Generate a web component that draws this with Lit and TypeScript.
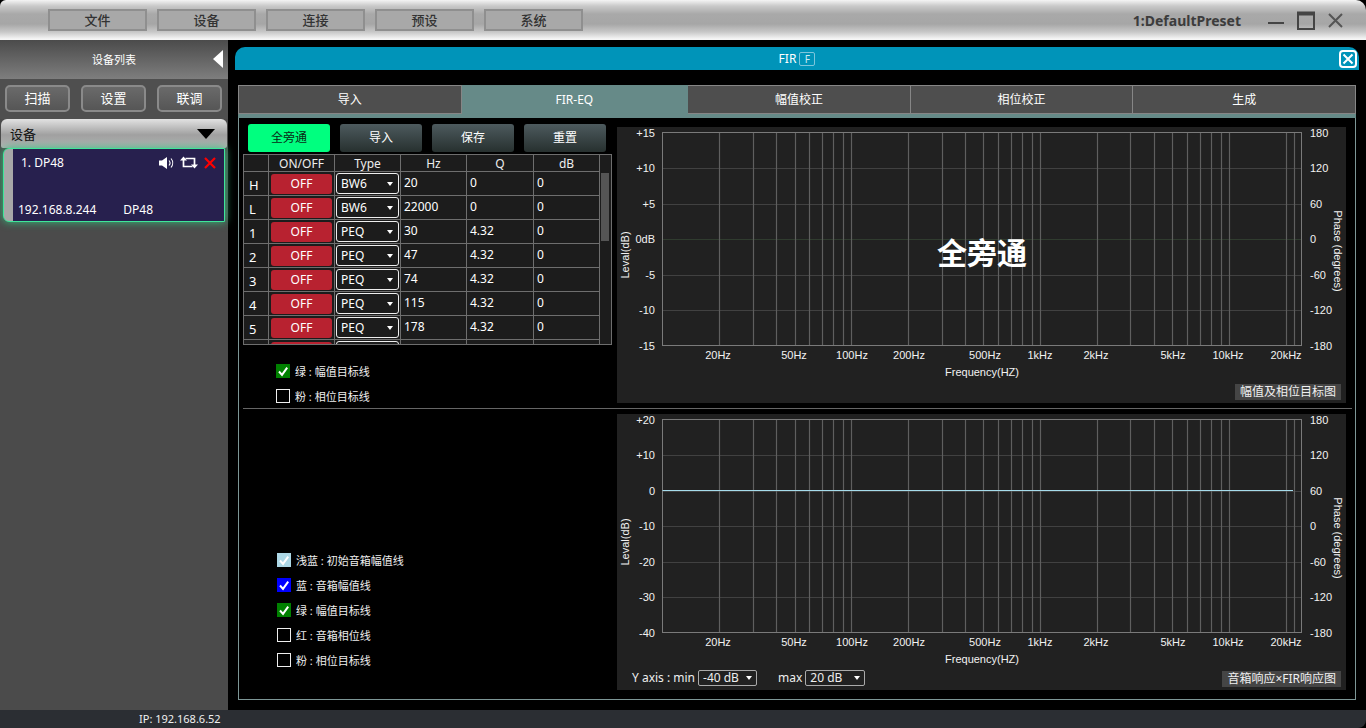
import { LitElement, html, svg, css } from 'lit'
import { customElement, property } from 'lit/decorators.js'

const FONT = css`"Noto Sans", "Noto Sans CJK SC", sans-serif`

// frequencies that get a vertical grid line
const FREQS = [20, 30, 40, 50, 60, 70, 80, 90, 100, 200, 300, 400, 500, 600, 700, 800, 900, 1000, 2000, 3000, 4000, 5000, 6000, 7000, 8000, 9000, 10000, 20000, 22000]
const TICKS: [string, number][] = [
  ['20Hz', 101], ['50Hz', 177], ['100Hz', 235], ['200Hz', 292], ['500Hz', 368],
  ['1kHz', 423], ['2kHz', 479], ['5kHz', 556], ['10kHz', 611], ['20kHz', 669],
]
const PHASE = ['180', '120', '60', '0', '-60', '-120', '-180']
const PLOT = { left: 45.5, right: 684.5, top: 5.5, bottom: 218.5 }

const freqX = (f: number) => Math.round(PLOT.left + 188.9 * Math.log10(f / 10)) + 0.5

@customElement('fir-chart')
export class FirChart extends LitElement {
  static styles = css`
    :host {
      display: block;
      position: relative;
      width: 729px;
      height: 276px;
      background: #212121;
    }
    svg {
      display: block;
    }
    text {
      font-family: 'Liberation Sans', sans-serif;
      font-size: 11px;
      fill: #f2f2f2;
    }
    .tag {
      position: absolute;
      right: 5px;
      bottom: 3px;
      height: 16px;
      padding: 0 5px;
      background: #454545;
      color: #f0f0f0;
      font-family: ${FONT};
      font-size: 12px;
      line-height: 16px;
    }
  `

  @property({ type: Array }) levels: string[] = []
  @property() tag = ''
  // dim green centre line on the target chart, light blue curve on the response chart
  @property({ type: Boolean }) curve = false

  private grid() {
    const step = (PLOT.bottom - PLOT.top) / 6
    return [1, 2, 3, 4, 5].map((i) => {
      const y = Math.round(PLOT.top + step * i) + 0.5
      const stroke = !this.curve && i === 3 ? '#41583f' : '#626262'
      return svg`<line x1=${PLOT.left} x2=${PLOT.right} y1=${y} y2=${y} stroke=${stroke} stroke-dasharray="1 1"></line>`
    })
  }

  render() {
    const step = (PLOT.bottom - PLOT.top) / 6
    return html`
      <svg width="729" height="276" viewBox="0 0 729 276">
        ${this.grid()}
        ${FREQS.map((f) => svg`<line x1=${freqX(f)} x2=${freqX(f)} y1=${PLOT.top} y2=${PLOT.bottom} stroke="#5f5f5f" stroke-width="1.2"></line>`)}
        <rect x=${PLOT.left} y=${PLOT.top} width=${PLOT.right - PLOT.left} height=${PLOT.bottom - PLOT.top} fill="none" stroke="#7a7a7a"></rect>
        ${this.curve ? svg`<line x1=${PLOT.left} x2="676" y1="76.5" y2="76.5" stroke="#a6dcec"></line>` : ''}
        ${this.levels.map((l, i) => svg`<text x="38" y=${PLOT.top + step * i + 4} text-anchor="end">${l}</text>`)}
        ${PHASE.map((l, i) => svg`<text x="693" y=${PLOT.top + step * i + 4}>${l}</text>`)}
        ${TICKS.map(([l, x]) => svg`<text x=${x} y="232" text-anchor="middle">${l}</text>`)}
        <text x="365" y="249" text-anchor="middle">Frequency(HZ)</text>
        <text transform="translate(12 128) rotate(-90)" text-anchor="middle">Leval(dB)</text>
        <text transform="translate(717 124) rotate(90)" text-anchor="middle">Phase (degrees)</text>
      </svg>
      <slot></slot>
      <div class="tag">${this.tag}</div>
    `
  }
}

interface EqRow {
  id: string
  type: string
  hz: string
  q: string
}

const ROWS: EqRow[] = [
  { id: 'H', type: 'BW6', hz: '20', q: '0' },
  { id: 'L', type: 'BW6', hz: '22000', q: '0' },
  { id: '1', type: 'PEQ', hz: '30', q: '4.32' },
  { id: '2', type: 'PEQ', hz: '47', q: '4.32' },
  { id: '3', type: 'PEQ', hz: '74', q: '4.32' },
  { id: '4', type: 'PEQ', hz: '115', q: '4.32' },
  { id: '5', type: 'PEQ', hz: '178', q: '4.32' },
  { id: '6', type: 'PEQ', hz: '276', q: '4.32' },
]

const MENU = ['文件', '设备', '连接', '预设', '系统']
const TABS = ['导入', 'FIR-EQ', '幅值校正', '相位校正', '生成']

@customElement('app-root')
export class AppRoot extends LitElement {
  static styles = css`
    :host {
      display: grid;
      grid-template-rows: 40px 1fr 18px;
      height: 728px;
      overflow: hidden;
      background: #000;
      color: #fff;
      font-family: ${FONT};
      font-size: 13px;
    }
    * {
      box-sizing: border-box;
    }

    /* title bar */
    .titlebar {
      display: flex;
      align-items: center;
      padding: 0 23px 0 48px;
      background: linear-gradient(#f4f4f4 0, #c9c9c9 6px, #a9a9a9 14px, #a6a6a6 24px, #c8c8c8 32px, #f6f6f6 39px);
      border-top-left-radius: 6px;
      border-top-right-radius: 10px;
    }
    .menu {
      display: flex;
      gap: 10px;
    }
    .menu div {
      width: 99px;
      height: 22px;
      border: 2px solid #8f8f8f;
      background: #a8a8a8;
      color: #333;
      font-size: 13px;
      font-weight: 500;
      line-height: 18px;
      text-align: center;
    }
    .preset {
      margin-left: auto;
      color: #3c3c3c;
      font-size: 14px;
      font-weight: 700;
    }
    .winbtns {
      display: flex;
      align-items: center;
      gap: 13px;
      margin-left: 27px;
    }
    .winbtns svg {
      display: block;
    }

    .body {
      display: flex;
      min-height: 0;
    }

    /* device list */
    .sidebar {
      width: 228px;
      background: #4b4b4b;
    }
    .side-head {
      position: relative;
      height: 39px;
      background: linear-gradient(#4b4b4b, #7e7e7e);
      font-size: 11px;
      line-height: 39px;
      text-align: center;
      padding-right: 0;
    }
    .side-head svg {
      position: absolute;
      right: 5px;
      top: 10px;
    }
    .side-btns {
      display: flex;
      gap: 11px;
      height: 40px;
      padding: 6px 6px 0 5px;
      background: #4f4f4f;
    }
    .side-btns div {
      flex: 1;
      height: 27px;
      border: 2px solid #8a8a8a;
      border-radius: 5px;
      background: linear-gradient(#6a6a6a, #565656);
      font-size: 13px;
      line-height: 23px;
      text-align: center;
    }
    .dev-select {
      display: flex;
      align-items: center;
      justify-content: space-between;
      height: 29px;
      margin: 0 1px;
      padding: 0 12px 0 9px;
      border-radius: 6px 6px 2px 2px;
      background: linear-gradient(#e2e2e2, #a0a0a0 55%, #b4b4b4);
      color: #111;
      font-size: 13px;
    }
    .card {
      display: flex;
      flex-direction: column;
      justify-content: space-between;
      height: 74px;
      margin: 0 3px;
      padding: 5px 0 3px 14px;
      border: 1px solid #3fe69a;
      border-radius: 6px 0 0 6px;
      background: linear-gradient(90deg, #a8a8a8 9px, #27204e 9px);
      box-shadow: 0 0 9px #2fbf7c;
      font-size: 12px;
    }
    .card-top {
      display: flex;
      align-items: center;
      padding-left: 3px;
      padding-right: 8px;
    }
    .card-icons {
      display: flex;
      align-items: center;
      gap: 6px;
      margin-left: auto;
    }
    .card-bottom {
      display: flex;
      gap: 27px;
    }

    /* FIR window */
    .main {
      flex: 1;
      min-width: 0;
      padding: 7px 7px 0;
    }
    .bar {
      position: relative;
      display: flex;
      align-items: center;
      justify-content: center;
      gap: 3px;
      height: 23px;
      border-radius: 10px 10px 0 0;
      background: #0094b9;
      font-size: 12px;
    }
    .bar .key {
      width: 16px;
      height: 14px;
      border: 1px solid #7cc6dc;
      border-radius: 2px;
      color: #cfeaf2;
      font-size: 10px;
      line-height: 12px;
      text-align: center;
    }
    .bar .close {
      position: absolute;
      right: 2px;
      top: 3px;
      display: block;
    }
    .panel {
      height: 615px;
      margin: 15px 3px 0;
      border: 1px solid #7d9696;
      border-top: 0;
    }
    .tabs {
      display: flex;
      height: 33px;
      margin: 0 -1px;
      border-bottom: 4px solid #668a88;
    }
    .tabs div {
      flex: 223;
      height: 29px;
      border: 1px solid #868686;
      border-left-width: 0;
      background: #4e4e4e;
      font-size: 12px;
      line-height: 28px;
      text-align: center;
    }
    .tabs div:first-child {
      border-left-width: 1px;
    }
    .tabs div.active {
      flex: 227;
      background: #668a88;
      border-color: #668a88;
    }
    .section {
      display: flex;
      justify-content: space-between;
      height: 290px;
      padding-right: 9px;
    }
    .section.top {
      height: 290px;
      padding-top: 9px;
    }
    .section.low {
      padding-top: 5px;
    }
    .divider {
      height: 1px;
      margin: 0 3px 0 4px;
      background: #666;
    }
    .left {
      width: 378px;
      margin-top: -3px;
      padding-left: 4px;
    }
    .actions {
      display: flex;
      gap: 10px;
      padding-left: 5px;
    }
    .actions div {
      width: 82px;
      height: 28px;
      border-radius: 3px;
      background: linear-gradient(#4d5a5e, #27302f);
      font-size: 12px;
      line-height: 28px;
      text-align: center;
    }
    .actions div.on {
      background: #00ff7f;
      color: #0a2a16;
    }

    /* eq table */
    .eq {
      display: flex;
      width: 369px;
      height: 191px;
      margin-top: 2px;
      border: 1px solid #6e6e6e;
      background: #1c1c1c;
      overflow: hidden;
    }
    table {
      flex: none;
      width: 356px;
      border-collapse: collapse;
      table-layout: fixed;
      align-self: flex-start;
      margin: -1px 0 0 -1px;
    }
    th,
    td {
      height: 24px;
      padding: 0;
      border: 1px solid #6e6e6e;
      font-size: 12px;
      font-weight: 400;
      vertical-align: middle;
    }
    th {
      height: 17px;
      line-height: 15px;
      color: #eee;
    }
    td.id {
      padding: 2px 0 0 5px;
      font-size: 13px;
    }
    td.val {
      padding: 0 0 3px 3px;
    }
    .off {
      width: 61px;
      height: 20px;
      margin: 0 auto;
      border-radius: 3px;
      background: #b82230;
      font-size: 12px;
      line-height: 20px;
      text-align: center;
    }
    .type {
      display: flex;
      align-items: center;
      justify-content: space-between;
      width: 63px;
      height: 21px;
      margin: 0 auto;
      padding: 0 5px 0 4px;
      border: 1.5px solid #eee;
      border-radius: 3px;
      font-size: 12px;
    }
    .arrow {
      width: 0;
      height: 0;
      border: 3.5px solid transparent;
      border-top: 4px solid #fff;
      border-bottom: 0;
    }
    .scroll {
      flex: 1;
      padding: 18px 2px 0 1px;
    }
    .scroll div {
      height: 68px;
      background: #555;
    }

    /* line legend */
    .checks {
      display: flex;
      flex-direction: column;
      gap: 11px;
    }
    .checks.upper {
      margin: 19px 0 0 33px;
    }
    .checks.lower {
      margin: 142px 0 0 34px;
    }
    .check {
      display: flex;
      align-items: center;
      gap: 5px;
      height: 14px;
      font-size: 11px;
      color: #eee;
    }
    .box {
      width: 14px;
      height: 14px;
      border: 1.5px solid #eee;
    }
    .box.filled {
      border: 0;
    }
    .box svg {
      display: block;
    }
    .big {
      position: absolute;
      left: 320px;
      top: 106px;
      font-size: 30px;
      font-weight: 700;
      line-height: 40px;
      color: #fff;
    }
    .axis {
      position: absolute;
      left: 15px;
      bottom: 4px;
      display: flex;
      align-items: center;
      gap: 3px;
      font-size: 12px;
      color: #eee;
    }
    .axis .pick {
      display: flex;
      align-items: center;
      justify-content: space-between;
      height: 16px;
      padding: 0 4px 0 4px;
      border: 1px solid #aaa;
      border-radius: 2px;
      font-size: 12px;
      line-height: 14px;
    }
    .axis .max {
      margin-left: 18px;
    }

    .footer {
      padding-left: 139px;
      background: #2b2e33;
      font-size: 11px;
      line-height: 18px;
      color: #f0f0f0;
      border-bottom-right-radius: 8px;
    }
  `

  private check(label: string, color = '') {
    return html`
      <div class="check">
        ${color
          ? html`<div class="box filled" style="background:${color}">
              <svg width="14" height="14" viewBox="0 0 14 14"><path d="M3 7.5 6 10.8 11.2 3.6" fill="none" stroke="#fff" stroke-width="2"></path></svg>
            </div>`
          : html`<div class="box"></div>`}
        <span>${label}</span>
      </div>
    `
  }

  private renderRow(r: EqRow) {
    return html`
      <tr>
        <td class="id">${r.id}</td>
        <td><div class="off">OFF</div></td>
        <td><div class="type"><span>${r.type}</span><i class="arrow"></i></div></td>
        <td class="val">${r.hz}</td>
        <td class="val">${r.q}</td>
        <td class="val">0</td>
      </tr>
    `
  }

  render() {
    return html`
      <header class="titlebar">
        <nav class="menu">${MENU.map((m) => html`<div>${m}</div>`)}</nav>
        <div class="preset">1:DefaultPreset</div>
        <div class="winbtns">
          <svg width="16" height="20" viewBox="0 0 16 20"><path d="M0 13h16" stroke="#444" stroke-width="2"></path></svg>
          <svg width="18" height="19" viewBox="0 0 18 19"><path d="M1 2h16v16H1z" fill="none" stroke="#444" stroke-width="2"></path><path d="M0 2.5h18" stroke="#444" stroke-width="4"></path></svg>
          <svg width="15" height="15" viewBox="0 0 15 15"><path d="M1 1l13 13M14 1 1 14" stroke="#555" stroke-width="2"></path></svg>
        </div>
      </header>

      <div class="body">
        <aside class="sidebar">
          <div class="side-head">
            设备列表
            <svg width="10" height="18" viewBox="0 0 10 18"><path d="M10 0v18L0 9z" fill="#fff"></path></svg>
          </div>
          <div class="side-btns"><div>扫描</div><div>设置</div><div>联调</div></div>
          <div class="dev-select">
            <span>设备</span>
            <svg width="18" height="10" viewBox="0 0 18 10"><path d="M0 0h18L9 10z" fill="#000"></path></svg>
          </div>
          <div class="card">
            <div class="card-top">
              <span>1. DP48</span>
              <div class="card-icons">
                <svg width="15" height="14" viewBox="0 0 15 14"><path d="M0 4.5h3L8 1v12L3 9.5H0z" fill="#fff"></path><path d="M10 4.5c1.2 1.4 1.2 3.6 0 5M12 2.5c2.2 2.6 2.2 6.4 0 9" fill="none" stroke="#fff" stroke-width="1.1"></path></svg>
                <svg width="18" height="13" viewBox="0 0 18 13"><path d="M3.5 3v7.5h9M14.5 10V2.5h-9" fill="none" stroke="#fff" stroke-width="1.7"></path><path d="M0 4.5 3.5 0.5 7 4.5zM11 8.5l3.5 4 3.5-4z" fill="#fff"></path></svg>
                <svg width="12" height="12" viewBox="0 0 12 12"><path d="M1 1l10 10M11 1 1 11" stroke="#f00" stroke-width="2.2"></path></svg>
              </div>
            </div>
            <div class="card-bottom"><span>192.168.8.244</span><span>DP48</span></div>
          </div>
        </aside>

        <main class="main">
          <div class="bar">
            <span>FIR</span><span class="key">F</span>
            <svg class="close" width="18" height="18" viewBox="0 0 18 18"><rect x="1" y="1" width="16" height="16" rx="3" fill="none" stroke="#fff" stroke-width="2"></rect><path d="M4.5 4.5l9 9M13.5 4.5l-9 9" stroke="#fff" stroke-width="2"></path></svg>
          </div>
          <section class="panel">
            <div class="tabs">
              ${TABS.map((t, i) => html`<div class=${i === 1 ? 'active' : ''}>${t}</div>`)}
            </div>
            <div class="section top">
              <div class="left">
                <div class="actions">
                  <div class="on">全旁通</div><div>导入</div><div>保存</div><div>重置</div>
                </div>
                <div class="eq">
                  <table>
                    <colgroup><col style="width:25px" /><col style="width:66px" /><col style="width:66px" /><col style="width:66px" /><col style="width:67px" /><col style="width:66px" /></colgroup>
                    <tr><th></th><th>ON/OFF</th><th>Type</th><th>Hz</th><th>Q</th><th>dB</th></tr>
                    ${ROWS.map((r) => this.renderRow(r))}
                  </table>
                  <div class="scroll"><div></div></div>
                </div>
                <div class="checks upper">
                  ${this.check('绿 : 幅值目标线', '#008000')}
                  ${this.check('粉 : 相位目标线')}
                </div>
              </div>
              <fir-chart tag="幅值及相位目标图" .levels=${['+15', '+10', '+5', '0dB', '-5', '-10', '-15']}>
                <div class="big">全旁通</div>
              </fir-chart>
            </div>
            <div class="divider"></div>
            <div class="section low">
              <div class="left">
                <div class="checks lower">
                  ${this.check('浅蓝 : 初始音箱幅值线', '#add8e6')}
                  ${this.check('蓝 : 音箱幅值线', '#0000ff')}
                  ${this.check('绿 : 幅值目标线', '#008000')}
                  ${this.check('红 : 音箱相位线')}
                  ${this.check('粉 : 相位目标线')}
                </div>
              </div>
              <fir-chart curve tag="音箱响应×FIR响应图" .levels=${['+20', '+10', '0', '-10', '-20', '-30', '-40']}>
                <div class="axis">
                  <span>Y axis : min</span>
                  <div class="pick" style="width:59px"><span>-40 dB</span><i class="arrow"></i></div>
                  <span class="max">max</span>
                  <div class="pick" style="width:60px"><span>20 dB</span><i class="arrow"></i></div>
                </div>
              </fir-chart>
            </div>
          </section>
        </main>
      </div>

      <footer class="footer">IP: 192.168.6.52</footer>
    `
  }
}

declare global {
  interface HTMLElementTagNameMap {
    'app-root': AppRoot
    'fir-chart': FirChart
  }
}
